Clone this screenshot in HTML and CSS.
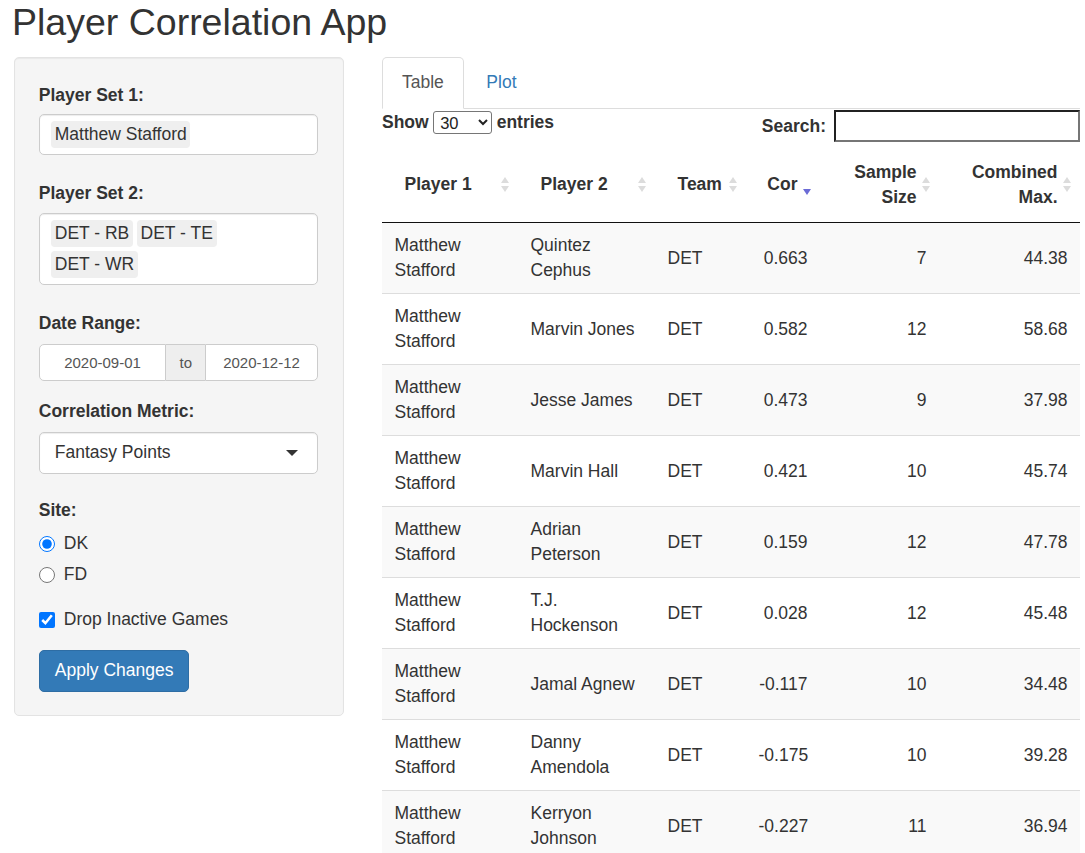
FILE: index.html
```html
<!DOCTYPE html>
<html lang="en">
<head>
<meta charset="utf-8">
<title>Player Correlation App</title>
<link rel="stylesheet" href="styles.css">
</head>
<body>
<div class="page">
  <h2 class="title">Player Correlation App</h2>
  <div class="layout">
    <aside class="well">
      <div class="group g-sel">
        <label class="lbl">Player Set 1:</label>
        <div class="sel multi"><span class="chip">Matthew Stafford</span></div>
      </div>
      <div class="group g-sel">
        <label class="lbl">Player Set 2:</label>
        <div class="sel multi"><span class="chip">DET - RB</span><span class="chip">DET - TE</span><span class="chip">DET - WR</span></div>
      </div>
      <div class="group g-date">
        <label class="lbl lbl-wide">Date Range:</label>
        <div class="daterange">
          <span class="date date-start">2020-09-01</span>
          <span class="addon">to</span>
          <span class="date date-end">2020-12-12</span>
        </div>
      </div>
      <div class="group g-metric">
        <label class="lbl lbl-wide">Correlation Metric:</label>
        <div class="sel single"><span>Fantasy Points</span><span class="caret"></span></div>
      </div>
      <div class="group g-site">
        <label class="lbl lbl-site">Site:</label>
        <label class="opt"><input type="radio" name="site" checked>DK</label>
        <label class="opt opt-fd"><input type="radio" name="site">FD</label>
      </div>
      <label class="opt opt-check"><input type="checkbox" checked>Drop Inactive Games</label>
      <button class="btn" type="button">Apply Changes</button>
    </aside>
    <main class="main">
      <ul class="tabs">
        <li class="tab active">Table</li>
        <li class="tab link">Plot</li>
      </ul>
      <div class="dt-top">
        <div class="dt-length"><span>Show</span><select class="len-select"><option>10</option><option selected>30</option><option>50</option></select><span>entries</span></div>
        <div class="dt-filter"><span>Search:</span><input class="search" type="search"></div>
      </div>
      <table class="dt">
        <colgroup>
          <col class="c1"><col class="c2"><col class="c3"><col class="c4"><col class="c5"><col class="c6">
        </colgroup>
        <thead>
          <tr>
            <th class="nowrap sortable">Player 1</th>
            <th class="nowrap sortable">Player 2</th>
            <th class="nowrap sortable">Team</th>
            <th class="nowrap num sorted">Cor</th>
            <th class="num sortable">Sample Size</th>
            <th class="num sortable">Combined Max.</th>
          </tr>
        </thead>
        <tbody>
          <tr class="odd"><td>Matthew Stafford</td><td>Quintez Cephus</td><td>DET</td><td class="r">0.663</td><td class="r">7</td><td class="r">44.38</td></tr>
          <tr><td>Matthew Stafford</td><td>Marvin Jones</td><td>DET</td><td class="r">0.582</td><td class="r">12</td><td class="r">58.68</td></tr>
          <tr class="odd"><td>Matthew Stafford</td><td>Jesse James</td><td>DET</td><td class="r">0.473</td><td class="r">9</td><td class="r">37.98</td></tr>
          <tr><td>Matthew Stafford</td><td>Marvin Hall</td><td>DET</td><td class="r">0.421</td><td class="r">10</td><td class="r">45.74</td></tr>
          <tr class="odd"><td>Matthew Stafford</td><td>Adrian Peterson</td><td>DET</td><td class="r">0.159</td><td class="r">12</td><td class="r">47.78</td></tr>
          <tr><td>Matthew Stafford</td><td>T.J. Hockenson</td><td>DET</td><td class="r">0.028</td><td class="r">12</td><td class="r">45.48</td></tr>
          <tr class="odd"><td>Matthew Stafford</td><td>Jamal Agnew</td><td>DET</td><td class="r">-0.117</td><td class="r">10</td><td class="r">34.48</td></tr>
          <tr><td>Matthew Stafford</td><td>Danny Amendola</td><td>DET</td><td class="r">-0.175</td><td class="r">10</td><td class="r">39.28</td></tr>
          <tr class="odd"><td>Matthew Stafford</td><td>Kerryon Johnson</td><td>DET</td><td class="r">-0.227</td><td class="r">11</td><td class="r">36.94</td></tr>
        </tbody>
      </table>
    </main>
  </div>
</div>
</body>
</html>
```

FILE: styles.css
```css
html, body {
  margin: 0;
  padding: 0;
  overflow: hidden;
  background: #fff;
}

body {
  font-family: "Liberation Sans", Arial, sans-serif;
  font-size: 17.5px;
  line-height: 25px;
  color: #333;
}

.page {
  padding: 2px 0 0 14px;
}

.title {
  margin: 0 0 13.75px -2px;
  font-size: 37.5px;
  font-weight: 400;
  line-height: 1.1;
  color: #333;
}

.layout {
  display: flex;
  align-items: flex-start;
}

/* ---------- sidebar ---------- */
.well {
  width: 330px;
  box-sizing: border-box;
  padding: 24.5px 23.75px 23px;
  background: #f5f5f5;
  border: 1px solid #e3e3e3;
  border-radius: 5px;
  box-shadow: inset 0 1px 1px rgba(0, 0, 0, 0.05);
  margin-right: 38px;
  flex: none;
}

.group {
  display: flex;
  flex-direction: column;
}

.g-sel { margin-bottom: 26px; }
.g-date { margin-bottom: 17.75px; }
.g-metric { margin-bottom: 24.5px; }
.g-site { margin-bottom: 20px; }

.lbl {
  display: block;
  font-weight: 700;
  margin-bottom: 6.25px;
}

.lbl-wide { margin-bottom: 7.75px; }
.lbl-site { margin-bottom: 8px; }

.sel {
  width: 279px;
  box-sizing: border-box;
  background: #fff;
  border: 1px solid #ccc;
  border-radius: 5px;
  box-shadow: inset 0 1px 1px rgba(0, 0, 0, 0.075);
}

.sel.multi {
  padding: 6.25px 15px 2.5px 11.25px;
  display: flex;
  flex-wrap: wrap;
}

.chip {
  display: inline-block;
  background: #efefef;
  border-radius: 3.75px;
  padding: 1px 3.75px;
  margin: 0 3.75px 3.75px 0;
  line-height: 25px;
  color: #333;
}

.sel.single {
  height: 42px;
  padding: 7.5px 19px 7.5px 15px;
  display: flex;
  align-items: center;
  justify-content: space-between;
}

.caret {
  width: 0;
  height: 0;
  border-style: solid;
  border-width: 6.25px 6.25px 0 6.25px;
  border-color: #333 transparent transparent transparent;
}

.daterange {
  display: flex;
  width: 279px;
  height: 37.5px;
  font-size: 15px;
  color: #555;
}

.date {
  display: flex;
  align-items: center;
  justify-content: center;
  box-sizing: border-box;
  background: #fff;
  border: 1px solid #ccc;
}

.date-start {
  width: 127.5px;
  border-radius: 5px 0 0 5px;
}

.date-end {
  width: 112.5px;
  border-radius: 0 5px 5px 0;
}

.addon {
  width: 39px;
  box-sizing: border-box;
  display: flex;
  align-items: center;
  justify-content: center;
  background: #eee;
  border-top: 1px solid #ccc;
  border-bottom: 1px solid #ccc;
  color: #555;
}

.opt {
  display: flex;
  align-items: center;
  height: 25px;
  font-weight: 400;
}

.opt input {
  width: 16px;
  height: 16px;
  margin: 0 9px 0 0;
  accent-color: #0075ff;
}

.opt-fd { margin-top: 6px; }

.opt-check { margin-bottom: 17.5px; }

.btn {
  display: block;
  font-family: inherit;
  font-size: 17.5px;
  line-height: 25px;
  color: #fff;
  background: #337ab7;
  border: 1px solid #2e6da4;
  border-radius: 5px;
  padding: 7.5px 15px;
  cursor: pointer;
}

/* ---------- main ---------- */
.main {
  width: 698px;
  flex: none;
}

.tabs {
  display: flex;
  list-style: none;
  margin: 0;
  padding: 0;
  border-bottom: 1px solid #ddd;
}

.tab {
  padding: 12px 19px 13px;
  border: 1px solid transparent;
  border-radius: 5px 5px 0 0;
  margin-bottom: -1px;
  margin-right: 2.5px;
  line-height: 25px;
}

.tab.active {
  color: #555;
  background: #fff;
  border-color: #ddd #ddd transparent #ddd;
}

.tab.link {
  color: #337ab7;
}

.dt-top {
  display: flex;
  justify-content: space-between;
  align-items: flex-start;
  margin-top: 1px;
  height: 32px;
  margin-bottom: 5px;
}

.dt-length {
  display: flex;
  align-items: center;
  gap: 4.5px;
  height: 25px;
  font-weight: 700;
}

.len-select {
  width: 59px;
  height: 23px;
  font-family: "Liberation Sans", Arial, sans-serif;
  font-size: 16.5px;
  font-weight: 400;
  color: #222;
  border: 1px solid #767676;
  border-radius: 3px;
  background: #fff;
  padding: 0 2px;
  margin: 0;
}

.dt-filter {
  display: flex;
  align-items: center;
  height: 32px;
  font-weight: 700;
}

.dt-filter span {
  margin-right: 8px;
}

.search {
  width: 246px;
  height: 32px;
  box-sizing: border-box;
  border: 2px inset #767676;
  padding: 1px 2px;
  font-size: 16px;
}

.dt {
  width: 698px;
  table-layout: fixed;
  border-collapse: separate;
  border-spacing: 0;
}

.c1 { width: 136px; }
.c2 { width: 137px; }
.c3 { width: 91px; }
.c4 { width: 74px; }
.c5 { width: 119px; }
.c6 { width: 141px; }

.dt th {
  position: relative;
  padding: 12.5px 20px 12.5px 22.5px;
  text-align: left;
  vertical-align: middle;
  font-weight: 700;
  line-height: 25px;
  border-bottom: 1px solid #111;
}

.dt th.num {
  text-align: right;
  padding-left: 6px;
  padding-right: 22.5px;
}

.dt th.nowrap {
  white-space: nowrap;
}

.dt th.sortable::before,
.dt th.sortable::after,
.dt th.sorted::after {
  content: "";
  position: absolute;
  right: 9.5px;
  width: 0;
  height: 0;
  border-style: solid;
}

.dt th.sortable::before {
  top: calc(50% - 8px);
  border-width: 0 4px 6.5px 4px;
  border-color: transparent transparent #dcdcdc transparent;
}

.dt th.sortable::after {
  top: calc(50% + 1px);
  border-width: 6.5px 4px 0 4px;
  border-color: #dcdcdc transparent transparent transparent;
}

.dt th.sorted::after {
  top: calc(50% + 4.5px);
  right: 9px;
  border-width: 6px 4.5px 0 4.5px;
  border-color: #6b6bd6 transparent transparent transparent;
}

.dt td {
  padding: 10px 12.5px;
  vertical-align: middle;
  line-height: 25px;
  border-top: 1px solid #ddd;
}

.dt tbody tr:first-child td {
  border-top: none;
}

.dt tr.odd td {
  background: #f9f9f9;
}

.dt td.r {
  text-align: right;
}
```
